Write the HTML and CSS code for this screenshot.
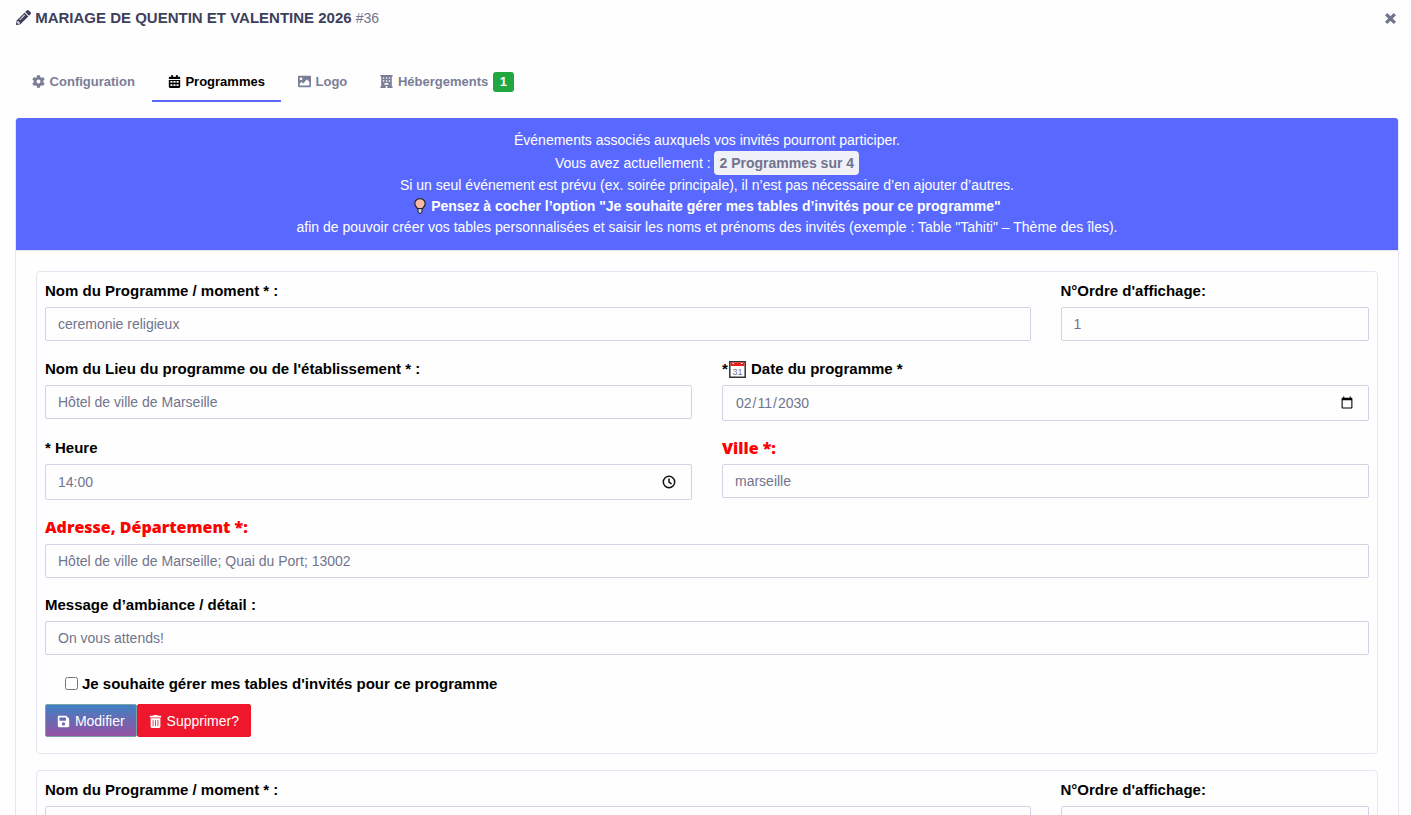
FILE: index.html
```html
<!DOCTYPE html>
<html lang="fr">
<head>
<meta charset="utf-8">
<meta name="viewport" content="width=device-width, initial-scale=1">
<title>Mariage de Quentin et Valentine 2026</title>
<link rel="stylesheet" href="styles.css">
</head>
<body>
<header class="header">
  <h1 class="title">
    <svg class="title-icon" viewBox="0 0 512 512" aria-hidden="true"><path fill-rule="evenodd" d="M498 142l-46 46c-5 5-12 5-17 0L324 77c-5-5-5-12 0-17l46-46c19-19 49-19 68 0l60 60c19 19 19 49 0 68zm-214-42L22 362 0 484c-3 16 12 30 28 28l122-22 262-262c5-5 5-12 0-17L301 100c-5-5-12-5-17 0zM124 340c-5-6-5-14 0-20l154-154c6-5 14-5 20 0s5 14 0 20L144 340c-6 5-14 5-20 0zm-36 84h48v36l-64 12-32-31 12-65h36v48z"/></svg>
    MARIAGE DE QUENTIN ET VALENTINE 2026 <small class="title-ref">#36</small>
  </h1>
  <button class="close" type="button" aria-label="Fermer"><svg viewBox="0 0 12 12" aria-hidden="true"><path d="M2 2l8 8M10 2l-8 8"/></svg></button>
</header>

<nav class="tabs">
  <a class="tab" href="#configuration"><svg class="icon" viewBox="0 0 512 512" aria-hidden="true"><path fill-rule="evenodd" d="M487 316l-42-25c4-23 4-47 0-70l42-25c5-3 8-9 6-14-11-36-30-68-55-95-4-4-10-5-15-2l-42 24c-18-15-39-27-61-35V25c0-6-4-11-9-12-36-8-74-8-110 0-5 1-9 6-9 12v49c-22 8-43 20-61 35L89 85c-5-3-11-2-15 2-25 27-44 59-55 95-2 5 1 11 6 14l42 25c-4 23-4 47 0 70l-42 25c-5 3-8 9-6 14 11 36 30 68 55 95 4 4 10 5 15 2l42-24c18 15 39 27 61 35v49c0 6 4 11 9 12 36 8 74 8 110 0 5-1 9-6 9-12v-49c22-8 43-20 61-35l42 24c5 3 11 2 15-2 25-27 44-59 55-95 2-5-1-11-6-14zM256 336a80 80 0 1 1 0-160 80 80 0 0 1 0 160z"/></svg> Configuration</a>
  <a class="tab tab-active" href="#programmes" aria-current="page"><svg class="icon" viewBox="0 0 448 512" aria-hidden="true"><path fill-rule="evenodd" d="M0 464c0 26 22 48 48 48h352c26 0 48-22 48-48V192H0v272zM64 240h80v64H64v-64zm120 0h80v64h-80v-64zm120 0h80v64h-80v-64zM64 368h80v64H64v-64zm120 0h80v64h-80v-64zm120 0h80v64h-80v-64zM400 64h-48V16c0-9-7-16-16-16h-32c-9 0-16 7-16 16v48H160V16c0-9-7-16-16-16h-32c-9 0-16 7-16 16v48H48C22 64 0 86 0 112v48h448v-48c0-26-22-48-48-48z"/></svg> Programmes</a>
  <a class="tab" href="#logo"><svg class="icon" viewBox="0 0 512 512" aria-hidden="true"><path fill-rule="evenodd" d="M464 480H48c-27 0-48-21-48-48V80c0-27 21-48 48-48h416c27 0 48 21 48 48v352c0 27-21 48-48 48zM120 96a56 56 0 1 0 0 112 56 56 0 0 0 0-112zM64 416h384V280l-88-100c-4-4-12-4-16 0L208 330l-56-56c-4-4-12-4-16 0l-72 72v70z"/></svg> Logo</a>
  <a class="tab" href="#hebergements"><svg class="icon" viewBox="0 0 512 512" aria-hidden="true"><path fill-rule="evenodd" d="M16 0h480v56h-32v400h32v56H288v-80h-64v80H16v-56h32V56H16V0zm96 96v56h56V96h-56zm116 0v56h56V96h-56zm116 0v56h56V96h-56zM112 208v56h56v-56h-56zm116 0v56h56v-56h-56zm116 0v56h56v-56h-56zM160 384h192c0-110-192-110-192 0z"/></svg> Hébergements <span class="count">1</span></a>
</nav>

<main class="card">
  <div class="banner">
    <p>Événements associés auxquels vos invités pourront participer.</p>
    <p>Vous avez actuellement : <strong class="quota">2 Programmes sur 4</strong></p>
    <p>Si un seul événement est prévu (ex. soirée principale), il n’est pas nécessaire d’en ajouter d’autres.</p>
    <p><svg class="bulb" viewBox="0 0 14 16" aria-hidden="true"><path d="M4.500 10.500C3.500 9 1.800 7.800 1.800 5.400a5.200 4.800 0 0 1 10.400 0c0 2.400-1.700 3.600-2.700 5.100z" fill="#f7b9a4" stroke="#222" stroke-width="1.200"/><path d="M5 10.500h4v3.500l-1 1.300H6L5 14z" fill="#d0d0d0" stroke="#222"/></svg> <strong>Pensez à cocher l’option "Je souhaite gérer mes tables d’invités pour ce programme"</strong></p>
    <p>afin de pouvoir créer vos tables personnalisées et saisir les noms et prénoms des invités (exemple : Table "Tahiti" – Thème des îles).</p>
  </div>

  <div class="card-body">
    <form class="programme">
      <div class="fields">
        <div class="field wide">
          <label for="nom-1">Nom du Programme / moment * :</label>
          <input class="control" id="nom-1" type="text" value="ceremonie religieux">
        </div>
        <div class="field narrow">
          <label for="ordre-1">N°Ordre d'affichage:</label>
          <input class="control" id="ordre-1" type="text" inputmode="numeric" value="1">
        </div>
        <div class="field half">
          <label class="label-tall" for="lieu-1">Nom du Lieu du programme ou de l'établissement * :</label>
          <input class="control" id="lieu-1" type="text" value="Hôtel de ville de Marseille">
        </div>
        <div class="field half">
          <label class="label-tall" for="date-1">*<svg class="calendar" viewBox="0 0 17 17" aria-hidden="true"><path d="M.800.800h15.400v15.400H.800z" fill="#fff" stroke="#333" stroke-width="1.500"/><path d="M1.500 1.500h14V5h-14z" fill="#e8201c"/><path d="M3.500 2.500h1.500M12 2.500h1.500" stroke="#fff"/><text x="8.500" y="13.800" text-anchor="middle">31</text></svg> Date du programme *</label>
          <input class="control control-tall" id="date-1" type="date" value="2030-02-11">
        </div>
        <div class="field half">
          <label for="heure-1">* Heure</label>
          <div class="time">
            <input class="control control-tall" id="heure-1" type="text" value="14:00">
            <svg class="clock" viewBox="0 0 14 14" aria-hidden="true"><circle cx="7" cy="7" r="5.700"/><path d="M7 3.500V7.200l2.600 1.600"/></svg>
          </div>
        </div>
        <div class="field half">
          <label class="required" for="ville-1">Ville *:</label>
          <input class="control" id="ville-1" type="text" value="marseille">
        </div>
        <div class="field full">
          <label class="required label-tall" for="adresse-1">Adresse, Département *:</label>
          <input class="control" id="adresse-1" type="text" value="Hôtel de ville de Marseille; Quai du Port; 13002">
        </div>
        <div class="field full">
          <label for="message-1">Message d’ambiance / détail :</label>
          <input class="control" id="message-1" type="text" value="On vous attends!">
        </div>
      </div>
      <div class="option">
        <input id="tables-1" type="checkbox">
        <label for="tables-1">Je souhaite gérer mes tables d'invités pour ce programme</label>
      </div>
      <div class="actions">
        <button class="btn btn-save" type="button"><svg class="icon" viewBox="0 0 448 512" aria-hidden="true"><path fill-rule="evenodd" d="M434 130l-84-84c-9-9-21-14-34-14H48C21 32 0 53 0 80v352c0 27 21 48 48 48h352c27 0 48-21 48-48V164c0-13-5-25-14-34zM224 416a64 64 0 1 1 0-128 64 64 0 0 1 0 128zm96-305v101c0 7-5 12-12 12H76c-7 0-12-5-12-12V108c0-7 5-12 12-12h229l15 15z"/></svg> Modifier</button>
        <button class="btn btn-delete" type="button"><svg class="icon" viewBox="0 0 448 512" aria-hidden="true"><path fill-rule="evenodd" d="M32 464c0 26 22 48 48 48h288c26 0 48-22 48-48V128H32v336zm272-256c0-21 32-21 32 0v224c0 21-32 21-32 0V208zm-96 0c0-21 32-21 32 0v224c0 21-32 21-32 0V208zm-96 0c0-21 32-21 32 0v224c0 21-32 21-32 0V208zM432 32H312l-9-19c-4-8-12-13-22-13H167c-9 0-18 5-22 13l-9 19H16C7 32 0 39 0 48v32c0 9 7 16 16 16h416c9 0 16-7 16-16V48c0-9-7-16-16-16z"/></svg> Supprimer?</button>
      </div>
    </form>

    <form class="programme">
      <div class="fields">
        <div class="field wide">
          <label for="nom-2">Nom du Programme / moment * :</label>
          <input class="control" id="nom-2" type="text">
        </div>
        <div class="field narrow">
          <label for="ordre-2">N°Ordre d'affichage:</label>
          <input class="control" id="ordre-2" type="text" inputmode="numeric">
        </div>
      </div>
    </form>
  </div>
</main>
</body>
</html>
```
FILE: styles.css
```css
* {
  box-sizing: border-box;
}

html {
  height: 100%;
  overflow: hidden;
}

body {
  height: 100%;
  margin: 0;
  overflow: hidden;
  background: #fefefe;
  color: #71748d;
  font: 14px/21px "Liberation Sans", Arial, sans-serif;
}

p,
h1 {
  margin: 0;
}

.icon {
  width: 13px;
  height: 13px;
  margin-right: 1px;
  vertical-align: -2px;
  fill: currentColor;
}

.header {
  display: flex;
  align-items: center;
  justify-content: space-between;
  padding: 8px 14px 8px 16px;
}

.title {
  color: #3d405c;
  font-size: 15px;
  line-height: 20px;
}

.title-icon {
  width: 15px;
  height: 15px;
  vertical-align: -2px;
  fill: currentColor;
}

.title-ref {
  color: #71748d;
  font-size: 14px;
  font-weight: 400;
}

.close {
  display: flex;
  padding: 0;
  border: 0;
  background: none;
}

.close svg {
  width: 13px;
  height: 13px;
  stroke: #71748d;
  stroke-width: 3;
}

.tabs {
  display: flex;
  gap: 1px;
  margin: 26px 16px 16px;
}

.tab {
  padding: 10px 16px 8px;
  border-bottom: 2px solid transparent;
  color: #7a7d96;
  font-size: 13px;
  font-weight: 700;
  line-height: 20px;
  text-decoration: none;
}

.tab-active {
  border-color: #5969ff;
  color: #000;
}

.count {
  display: inline-block;
  margin-left: 1px;
  padding: 0 7px;
  border-radius: 3px;
  background: #21a740;
  color: #fff;
}

.card {
  margin: 0 12px 0 15px;
  border: 1px solid #e6e6f2;
  border-top: 0;
  border-radius: 4px;
}

.banner {
  padding: 12px;
  border-radius: 3px 3px 0 0;
  background: #5969ff;
  color: #fff;
  text-align: center;
}

.quota {
  display: inline-block;
  padding: 0 5px;
  border-radius: 4px;
  background: #f0f0f8;
  color: #71748d;
  line-height: 24px;
}

.bulb {
  width: 14px;
  height: 16px;
  vertical-align: -3px;
}

.card-body {
  display: grid;
  gap: 16px;
  padding: 20px;
  border-top: 1px solid #e6e6f2;
}

.programme {
  padding: 8px 8px 16px;
  border: 1px solid #e6e6f2;
  border-radius: 4px;
}

.fields {
  display: grid;
  grid-template-columns: repeat(12, 1fr);
  gap: 16px 30px;
  align-items: start;
}

.wide {
  grid-column: span 9;
}

.narrow {
  grid-column: span 3;
}

.half {
  grid-column: span 6;
}

.full {
  grid-column: span 12;
}

.field {
  display: grid;
  gap: 5px;
}

label {
  color: #000;
  font-size: 15px;
  font-weight: 700;
  line-height: 22px;
}

.label-tall {
  line-height: 23px;
}

.required {
  color: #f00;
  font-family: "Open Sans", sans-serif;
  font-size: 16px;
  font-weight: 800;
}

.calendar {
  width: 17px;
  height: 17px;
  margin: 0 1px;
  vertical-align: -4px;
}

.calendar text {
  fill: #71748d;
  font-size: 9px;
  font-weight: 400;
}

.control {
  width: 100%;
  height: 34px;
  padding: 0 12px;
  border: 1px solid #d2d2e4;
  border-radius: 2px;
  background: #fefefe;
  color: #71748d;
  font: 14px/20px "Liberation Sans", Arial, sans-serif;
}

.control-tall {
  height: 36px;
}

.time {
  position: relative;
}

.clock {
  position: absolute;
  top: 11px;
  right: 16px;
  width: 14px;
  height: 14px;
  fill: none;
  stroke: #111;
  stroke-width: 1.5;
}

.option {
  display: flex;
  align-items: center;
  gap: 4px;
  margin: 16px 0 8px 20px;
  line-height: 24px;
}

.option input {
  width: 13px;
  height: 13px;
  margin: 0;
}

.option label {
  line-height: 25px;
}

.actions {
  display: flex;
}

.btn {
  height: 33px;
  padding: 0 11px;
  border: 1px solid;
  border-radius: 2px;
  color: #fff;
  font: 14px/20px "Liberation Sans", Arial, sans-serif;
}

.btn-save {
  border-color: #79a3a4;
  background: linear-gradient(#4081c4, #9750a2);
}

.btn-delete {
  border-color: #ef172c;
  background: #ef172c;
}
```
